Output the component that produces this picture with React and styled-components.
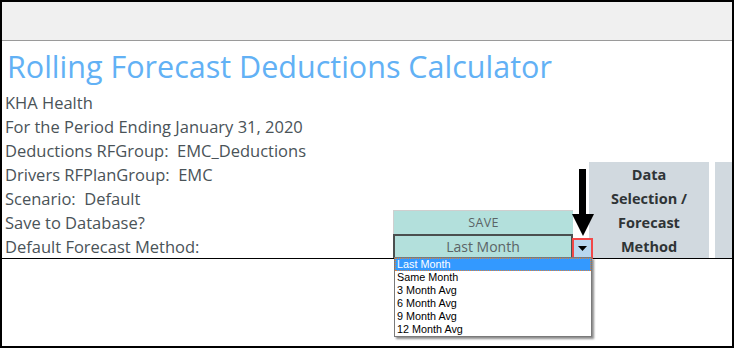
import React from "react";
import styled, { createGlobalStyle } from "styled-components";

const GlobalStyle = createGlobalStyle`
  html, body {
    margin: 0;
    padding: 0;
    background: #fff;
  }
  * {
    box-sizing: border-box;
  }
`;

const methods = [
  "Last Month",
  "Same Month",
  "3 Month Avg",
  "6 Month Avg",
  "9 Month Avg",
  "12 Month Avg",
];

const labels = [
  "KHA Health",
  "For the Period Ending January 31, 2020",
  "Deductions RFGroup:  EMC_Deductions",
  "Drivers RFPlanGroup:  EMC",
  "Scenario:  Default",
  "Save to Database?",
  "Default Forecast Method:",
];

const App = () => {
  return (
    <>
      <GlobalStyle />
      <Frame>
        <TopBar />
        <Title>Rolling Forecast Deductions Calculator</Title>
        <Sheet>
          {labels.map((text, i) => (
            <Label key={text} row={i + 1}>
              {text}
            </Label>
          ))}
          <SaveCell>SAVE</SaveCell>
          <MethodCell>
            Last Month
            <DropButton>
              <svg width="9" height="5" viewBox="0 0 9 5">
                <path d="M0 0h9L4.5 5z" fill="#000" />
              </svg>
            </DropButton>
          </MethodCell>
          <HeaderCol>
            Data
            <br />
            Selection /
            <br />
            Forecast
            <br />
            Method
          </HeaderCol>
          <HeaderCol />
        </Sheet>

        <Pointer width="22" height="68" viewBox="0 0 22 68">
          <rect x="7" y="0" width="7" height="46" fill="#000" />
          <path d="M0 45h22L11 67z" fill="#000" />
        </Pointer>

        <DropList>
          {methods.map((m, i) => (
            <DropItem key={m} active={i === 0}>
              {m}
            </DropItem>
          ))}
        </DropList>
      </Frame>
    </>
  );
};

const Frame = styled.div`
  position: relative;
  width: 734px;
  height: 348px;
  border: 2px solid #000;
  background: #fff;
  overflow: hidden;
  font-family: "Open Sans", "Noto Sans", sans-serif;
`;

const TopBar = styled.div`
  height: 39px;
  background: #f0f0f0;
  border-bottom: 1px solid #9a9a9a;
`;

const Title = styled.h1`
  margin: 0;
  height: 49px;
  padding-left: 5px;
  font-weight: 400;
  font-size: 30.5px;
  line-height: 50px;
  color: #62b1f5;
  white-space: nowrap;
`;

const Sheet = styled.div`
  display: grid;
  grid-template-columns: 391px 180px 16px 120px 6px 1fr;
  grid-template-rows: repeat(7, 24px);
  border-bottom: 1px solid #000;
`;

const Label = styled.div`
  grid-column: 1 / 3;
  grid-row: ${(p) => p.row};
  padding-left: 3px;
  font-size: 16.5px;
  line-height: 26px;
  color: #4a5358;
  white-space: pre;
  z-index: 0;
`;

const SaveCell = styled.div`
  grid-column: 2;
  grid-row: 6;
  background: #b3e0dc;
  border-top: 1px solid #cfcfcf;
  border-left: 1px solid #cfcfcf;
  text-align: center;
  font-size: 12.5px;
  line-height: 23px;
  letter-spacing: 0.3px;
  color: #5b6466;
  z-index: 1;
`;

const MethodCell = styled.div`
  position: relative;
  grid-column: 2;
  grid-row: 7;
  background: #b3e0dc;
  border: 2px solid #4b4f4f;
  border-bottom: none;
  text-align: center;
  font-size: 14px;
  line-height: 22px;
  color: #5b6466;
  z-index: 1;
`;

const DropButton = styled.div`
  position: absolute;
  left: 177px;
  top: 2px;
  width: 21px;
  height: 21px;
  border: 2px solid #f24848;
  background: #b8d6ee;
  display: flex;
  align-items: center;
  justify-content: center;
  z-index: 2;
`;

const HeaderCol = styled.div`
  grid-row: 4 / 8;
  grid-column: ${(p) => (p.children ? 4 : 6)};
  background: #d1d9df;
  text-align: center;
  font-weight: 700;
  font-size: 14.5px;
  line-height: 24px;
  padding-top: 1px;
  color: #2f3436;
`;

const Pointer = styled.svg`
  position: absolute;
  left: 570px;
  top: 167px;
  z-index: 3;
`;

const DropList = styled.div`
  position: absolute;
  left: 392px;
  top: 255px;
  width: 198px;
  padding: 0;
  background: #fff;
  border: 1px solid #7a7a7a;
  box-shadow: 2px 2px 2px rgba(0, 0, 0, 0.45);
  z-index: 4;
`;

const DropItem = styled.div`
  height: 13px;
  padding-left: 2px;
  font-family: "Liberation Sans", Arial, sans-serif;
  font-size: 10.8px;
  line-height: 13px;
  color: ${(p) => (p.active ? "#fff" : "#000")};
  background: ${(p) => (p.active ? "#3399ff" : "transparent")};
  outline: ${(p) => (p.active ? "1px dotted #e0823a" : "none")};
  outline-offset: -1px;
`;

export default App;
